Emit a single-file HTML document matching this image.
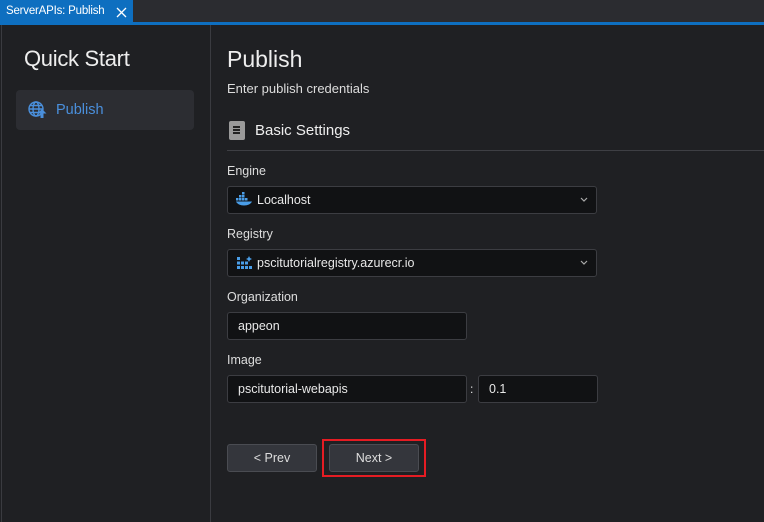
<!DOCTYPE html><html><head><style>
*{margin:0;padding:0;box-sizing:border-box}
body{width:764px;height:522px;background:#1f2023;font-family:"Liberation Sans",sans-serif;color:#e6e6e6;position:relative;overflow:hidden;font-size:13px}
.a{position:absolute}
.inp{position:absolute;background:#111214;border:1px solid #3c3d42;border-radius:3px;font-size:12.5px;color:#e8e8e8;padding-left:10px;line-height:26px}
.lbl{position:absolute;left:227px;font-size:12.5px;color:#ddd}
.btn{position:absolute;background:#34363c;border:1px solid #4a4c52;border-radius:3px;font-size:12.5px;color:#ddd;text-align:center;line-height:26px}
.chev{position:absolute;right:8px;top:10px}
</style></head><body>
<div class="a" style="left:0;top:0;width:764px;height:23px;background:#2b2c30"></div>
<div class="a" style="left:0;top:0;width:133px;height:23px;background:#0e6fc0;font-size:11.5px;color:#fff;padding:5px 0 0 6px;white-space:nowrap;letter-spacing:-0.2px">ServerAPIs: Publish</div>
<svg class="a" style="left:116px;top:7px" width="11" height="11" viewBox="0 0 11 11"><path d="M1 1l9 9M10 1l-9 9" stroke="#fff" stroke-width="1.3"/></svg>
<div class="a" style="left:0;top:22px;width:764px;height:3px;background:#0e6fc0"></div>
<div class="a" style="left:1px;top:25px;width:1px;height:497px;background:#3a3b40"></div>
<div class="a" style="left:210px;top:25px;width:1px;height:497px;background:#3a3b40"></div>
<div class="a" style="left:24px;top:46px;font-size:22px;color:#eee;letter-spacing:-0.3px">Quick Start</div>
<div class="a" style="left:16px;top:90px;width:178px;height:40px;background:#2c2d32;border-radius:4px"></div>
<svg class="a" style="left:28px;top:101px" width="20" height="18" viewBox="0 0 20 18"><g fill="none" stroke="#4a8fdc" stroke-width="1.4"><circle cx="8" cy="8" r="7"/><ellipse cx="8" cy="8" rx="3" ry="7"/><path d="M1 8h14M2 4.5h12M2 11.5h9"/></g><path d="M14 8l4.5 4.5h-3V17h-3v-4.5h-3z" fill="#4a8fdc"/></svg>
<div class="a" style="left:56px;top:102px;font-size:14.5px;color:#4a8fdc">Publish</div>
<div class="a" style="left:227px;top:46px;font-size:23px;color:#eee">Publish</div>
<div class="a" style="left:227px;top:81px;font-size:13px;color:#ddd">Enter publish credentials</div>
<div class="a" style="left:229px;top:121px;width:16px;height:19px;background:#9a9a9a;border-radius:2px"><div style="margin:5px 4px;height:2px;width:7px;background:#222;box-shadow:0 3px 0 #222,0 6px 0 #222"></div></div>
<div class="a" style="left:255px;top:122px;font-size:15px;color:#eee">Basic Settings</div>
<div class="a" style="left:227px;top:150px;width:537px;height:1px;background:#3e3f44"></div>
<div class="lbl" style="top:164px">Engine</div>
<div class="inp" style="left:227px;top:186px;width:370px;height:28px;padding-left:29px">Localhost<svg class="chev" width="8" height="5" viewBox="0 0 8 5"><path d="M1 1l3 3 3-3" stroke="#aaa" fill="none" stroke-width="1.2"/></svg></div>
<svg class="a" style="left:236px;top:192px" width="16" height="14" viewBox="0 0 16 14"><g fill="#4a9ee8"><rect x="6" y="0" width="2.5" height="2.5"/><rect x="3" y="3" width="2.5" height="2.5"/><rect x="6" y="3" width="2.5" height="2.5"/><rect x="0" y="6" width="2.5" height="2.5"/><rect x="3" y="6" width="2.5" height="2.5"/><rect x="6" y="6" width="2.5" height="2.5"/><rect x="9" y="6" width="2.5" height="2.5"/><path d="M0 9.5h16c-1 2.5-4.5 4-8 4S1 12 0 9.5z"/></g></svg>
<div class="lbl" style="top:227px">Registry</div>
<div class="inp" style="left:227px;top:249px;width:370px;height:28px;padding-left:29px">pscitutorialregistry.azurecr.io<svg class="chev" width="8" height="5" viewBox="0 0 8 5"><path d="M1 1l3 3 3-3" stroke="#aaa" fill="none" stroke-width="1.2"/></svg></div>
<svg class="a" style="left:237px;top:256px" width="15" height="14" viewBox="0 0 15 14"><g fill="#4a9ee8"><rect x="0" y="1" width="3" height="3"/><rect x="0" y="5.5" width="3" height="3"/><rect x="0" y="10" width="3" height="3"/><rect x="4" y="5.5" width="3" height="3"/><rect x="4" y="10" width="3" height="3"/><rect x="8" y="10" width="3" height="3"/><rect x="8" y="5.5" width="3" height="3"/><rect x="12" y="10" width="3" height="3"/><path d="M12 0l1 2 2 1-2 1-1 2-1-2-2-1 2-1z"/></g></svg>
<div class="lbl" style="top:290px">Organization</div>
<div class="inp" style="left:227px;top:312px;width:240px;height:28px">appeon</div>
<div class="lbl" style="top:353px">Image</div>
<div class="inp" style="left:227px;top:375px;width:240px;height:28px">pscitutorial-webapis</div>
<div class="a" style="left:470px;top:382px;font-size:12px">:</div>
<div class="inp" style="left:478px;top:375px;width:120px;height:28px">0.1</div>
<div class="btn" style="left:227px;top:444px;width:90px;height:28px">&lt; Prev</div>
<div class="a" style="left:322px;top:439px;width:104px;height:38px;border:2px solid #e51c23"></div>
<div class="btn" style="left:329px;top:444px;width:90px;height:28px">Next &gt;</div>
</body></html>
